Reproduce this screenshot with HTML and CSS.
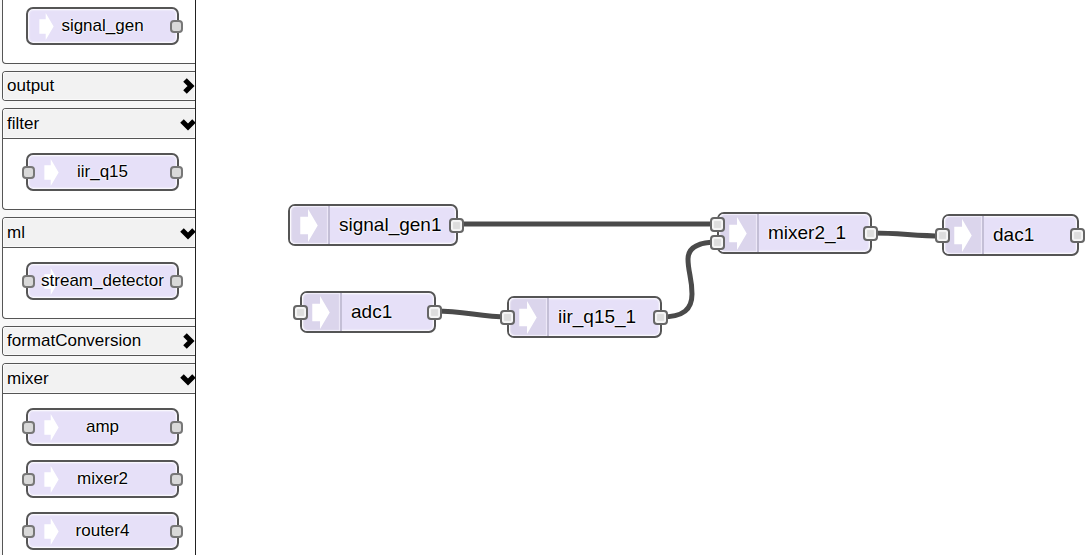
FILE: index.html
```html
<!DOCTYPE html>
<html lang="en">
<head>
<meta charset="utf-8">
<title>Flow editor</title>
<link rel="stylesheet" href="styles.css">
</head>
<body>
<svg class="defs" aria-hidden="true">
  <symbol id="arrow" viewBox="0 0 18 34"><path d="M0 8H8V0L18 17L8 34V26H0Z"/></symbol>
  <symbol id="right" viewBox="0 0 16 16"><path d="M5 2L11 8L5 14"/></symbol>
  <symbol id="down" viewBox="0 0 16 16"><path d="M2 5L8 11L14 5"/></symbol>
</svg>
<div class="editor">
  <aside class="palette">
    <section class="category scrolled">
      <div class="items">
        <div class="item source"><svg class="arrow"><use href="#arrow"/></svg><span>signal_gen</span><i class="port out"></i></div>
      </div>
    </section>
    <section class="category">
      <button class="heading" aria-expanded="false">output<svg class="chevron"><use href="#right"/></svg></button>
    </section>
    <section class="category open">
      <button class="heading" aria-expanded="true">filter<svg class="chevron"><use href="#down"/></svg></button>
      <div class="items">
        <div class="item"><i class="port in"></i><svg class="arrow"><use href="#arrow"/></svg><span>iir_q15</span><i class="port out"></i></div>
      </div>
    </section>
    <section class="category open">
      <button class="heading" aria-expanded="true">ml<svg class="chevron"><use href="#down"/></svg></button>
      <div class="items">
        <div class="item"><i class="port in"></i><svg class="arrow"><use href="#arrow"/></svg><span>stream_detector</span><i class="port out"></i></div>
      </div>
    </section>
    <section class="category">
      <button class="heading" aria-expanded="false">formatConversion<svg class="chevron"><use href="#right"/></svg></button>
    </section>
    <section class="category open">
      <button class="heading" aria-expanded="true">mixer<svg class="chevron"><use href="#down"/></svg></button>
      <div class="items">
        <div class="item"><i class="port in"></i><svg class="arrow"><use href="#arrow"/></svg><span>amp</span><i class="port out"></i></div>
        <div class="item"><i class="port in"></i><svg class="arrow"><use href="#arrow"/></svg><span>mixer2</span><i class="port out"></i></div>
        <div class="item"><i class="port in"></i><svg class="arrow"><use href="#arrow"/></svg><span>router4</span><i class="port out"></i></div>
      </div>
    </section>
  </aside>
  <main class="canvas">
    <svg class="wires" aria-hidden="true">
      <path d="M262 224L522 224"/>
      <path d="M239 311C270 311 283 317 312 317"/>
      <path d="M465 317C488 317 496 309 496 294C496 278 492 272 492 259C492 247 503 242 522 242"/>
      <path d="M676 233C705 233 718 236 747 236"/>
    </svg>
    <div class="node signal-gen1"><div class="badge"><svg class="arrow"><use href="#arrow"/></svg></div><span>signal_gen1</span><i class="port out"></i></div>
    <div class="node adc1"><i class="port in"></i><div class="badge"><svg class="arrow"><use href="#arrow"/></svg></div><span>adc1</span><i class="port out"></i></div>
    <div class="node iir1"><i class="port in"></i><div class="badge"><svg class="arrow"><use href="#arrow"/></svg></div><span>iir_q15_1</span><i class="port out"></i></div>
    <div class="node mixer1"><i class="port in first"></i><i class="port in second"></i><div class="badge"><svg class="arrow"><use href="#arrow"/></svg></div><span>mixer2_1</span><i class="port out"></i></div>
    <div class="node dac1"><i class="port in"></i><div class="badge"><svg class="arrow"><use href="#arrow"/></svg></div><span>dac1</span><i class="port out"></i></div>
  </main>
</div>
</body>
</html>
```
FILE: styles.css
```css
* { box-sizing: border-box; }
body {
  margin: 0;
  font-family: "Liberation Sans", Arial, sans-serif;
  font-size: 17px;
  color: #000;
  background: #fff;
}
.defs { display: none; }
.editor { display: flex; height: 100vh; overflow: hidden; }

.palette {
  flex: none;
  width: 196px;
  display: flex;
  flex-direction: column;
  gap: 7px;
  padding-left: 2px;
  overflow: hidden;
  background: #f8f8f8;
  border-right: 1px solid #222;
}
.category {
  flex: none;
  border: 1px solid #555;
  border-right: 0;
  border-radius: 4px 0 0 4px;
  background: #fff;
  overflow: hidden;
}
.category.scrolled { border-top: 0; border-top-left-radius: 0; }
.heading {
  display: flex;
  align-items: center;
  justify-content: space-between;
  width: 100%;
  height: 28px;
  padding: 0 0 0 4px;
  border: 0;
  background: #f2f2f2;
  box-shadow: inset 0 0 0 1px #fafafa;
  font: inherit;
  color: inherit;
  text-align: left;
  text-shadow: 0 0 2px #fff, 0 0 2px #fff;
}
.open .heading { height: 30px; border-bottom: 1px solid #555; }
.chevron {
  flex: none;
  width: 16px;
  height: 16px;
  margin-right: -1px;
  fill: none;
  stroke: #000;
  stroke-width: 5px;
}
.items {
  display: flex;
  flex-direction: column;
  gap: 14px;
  padding: 14px 16px 18px 23px;
}
.scrolled .items { padding-top: 7px; }

.item, .node {
  display: flex;
  align-items: center;
  border: 2px solid #555;
  border-radius: 7px;
  background: #e6e0f8;
  box-shadow: inset 0 0 2px 1px #fff;
  text-shadow: 0 0 2px #fff, 0 0 2px #fff, 0 0 2px #fff;
  white-space: nowrap;
}
.item {
  position: relative;
  justify-content: center;
  height: 38px;
}
.item span { position: relative; }
.arrow { fill: #fff; }
.item .arrow { position: absolute; left: 16px; top: 4px; width: 15px; height: 27px; }
.item.source .arrow { left: 11px; }

.port {
  position: absolute;
  top: 50%;
  width: 13px;
  height: 13px;
  margin-top: -6px;
  border: 2px solid #777;
  border-radius: 4px;
  background: #d9d9d9;
}
.port.in { left: -6px; }
.port.out { right: -6px; }

.canvas { position: relative; flex: 1; min-width: 0; overflow: hidden; }
.wires { position: absolute; inset: 0; width: 100%; height: 100%; fill: none; stroke: #4a4a4a; stroke-width: 5px; }
.node { position: absolute; height: 42px; font-size: 19px; }
.node .port {
  width: 15px;
  height: 15px;
  margin-top: -7px;
  border-color: #666;
  background: #ddd;
  box-shadow: inset 0 0 1px 2px #f6f6f6;
}
.node .port.in { left: -9px; }
.node .port.out { right: -8px; }
.node .port.first { top: 10px; }
.node .port.second { top: 28px; }
.badge {
  display: flex;
  align-items: center;
  width: 40px;
  height: 100%;
  margin-right: 9px;
  padding-left: 10px;
  border-right: 2px solid #c4bfd6;
  border-radius: 5px 0 0 5px;
  background: #dbd5ec;
  box-shadow: inset 1px 0 2px #fff, inset 0 0 1px 1px #eee9fa;
}
.badge .arrow { width: 18px; height: 33px; }
.signal-gen1 { left: 92px; top: 204px; width: 170px; }
.adc1 { left: 104px; top: 291px; width: 136px; }
.iir1 { left: 311px; top: 296px; width: 155px; }
.mixer1 { left: 521px; top: 212px; width: 155px; }
.dac1 { left: 746px; top: 214px; width: 137px; }
```
